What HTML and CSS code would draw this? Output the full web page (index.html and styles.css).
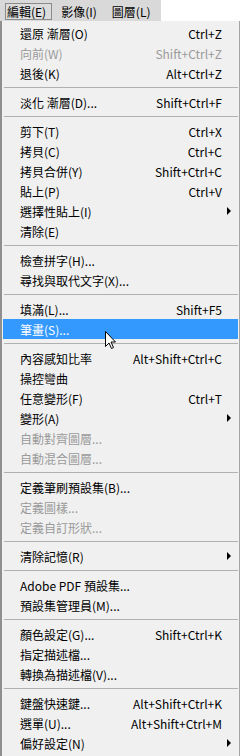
FILE: index.html
```html
<!DOCTYPE html>
<html lang="zh-Hant">
<head>
<meta charset="utf-8">
<link rel="stylesheet" href="styles.css">
</head>
<body>
<div class="screen">
  <div class="topline">
    <nav class="menubar">
      <span class="mb-item active">編輯(E)</span>
      <span class="mb-item">影像(I)</span>
      <span class="mb-item">圖層(L)</span>
    </nav>
  </div>
  <div class="menu">
    <div class="row"><span class="lbl">還原 漸層(O)</span><span class="key">Ctrl+Z</span><span class="sub"></span></div>
    <div class="row dis"><span class="lbl">向前(W)</span><span class="key">Shift+Ctrl+Z</span><span class="sub"></span></div>
    <div class="row"><span class="lbl">退後(K)</span><span class="key">Alt+Ctrl+Z</span><span class="sub"></span></div>
    <div class="sep"></div>
    <div class="row"><span class="lbl">淡化 漸層(D)...</span><span class="key">Shift+Ctrl+F</span><span class="sub"></span></div>
    <div class="sep"></div>
    <div class="row"><span class="lbl">剪下(T)</span><span class="key">Ctrl+X</span><span class="sub"></span></div>
    <div class="row"><span class="lbl">拷貝(C)</span><span class="key">Ctrl+C</span><span class="sub"></span></div>
    <div class="row"><span class="lbl">拷貝合併(Y)</span><span class="key">Shift+Ctrl+C</span><span class="sub"></span></div>
    <div class="row"><span class="lbl">貼上(P)</span><span class="key">Ctrl+V</span><span class="sub"></span></div>
    <div class="row"><span class="lbl">選擇性貼上(I)</span><span class="key"></span><span class="sub"><i class="arrow"></i></span></div>
    <div class="row"><span class="lbl">清除(E)</span><span class="key"></span><span class="sub"></span></div>
    <div class="sep"></div>
    <div class="row"><span class="lbl">檢查拼字(H)...</span><span class="key"></span><span class="sub"></span></div>
    <div class="row"><span class="lbl">尋找與取代文字(X)...</span><span class="key"></span><span class="sub"></span></div>
    <div class="sep"></div>
    <div class="row"><span class="lbl">填滿(L)...</span><span class="key">Shift+F5</span><span class="sub"></span></div>
    <div class="row hot"><span class="lbl">筆畫(S)...</span><span class="key"></span><span class="sub"></span></div>
    <div class="sep"></div>
    <div class="row"><span class="lbl">內容感知比率</span><span class="key">Alt+Shift+Ctrl+C</span><span class="sub"></span></div>
    <div class="row"><span class="lbl">操控彎曲</span><span class="key"></span><span class="sub"></span></div>
    <div class="row"><span class="lbl">任意變形(F)</span><span class="key">Ctrl+T</span><span class="sub"></span></div>
    <div class="row"><span class="lbl">變形(A)</span><span class="key"></span><span class="sub"><i class="arrow"></i></span></div>
    <div class="row dis"><span class="lbl">自動對齊圖層...</span><span class="key"></span><span class="sub"></span></div>
    <div class="row dis"><span class="lbl">自動混合圖層...</span><span class="key"></span><span class="sub"></span></div>
    <div class="sep"></div>
    <div class="row"><span class="lbl">定義筆刷預設集(B)...</span><span class="key"></span><span class="sub"></span></div>
    <div class="row dis"><span class="lbl">定義圖樣...</span><span class="key"></span><span class="sub"></span></div>
    <div class="row dis"><span class="lbl">定義自訂形狀...</span><span class="key"></span><span class="sub"></span></div>
    <div class="sep"></div>
    <div class="row"><span class="lbl">清除記憶(R)</span><span class="key"></span><span class="sub"><i class="arrow"></i></span></div>
    <div class="sep"></div>
    <div class="row"><span class="lbl">Adobe PDF 預設集...</span><span class="key"></span><span class="sub"></span></div>
    <div class="row"><span class="lbl">預設集管理員(M)...</span><span class="key"></span><span class="sub"></span></div>
    <div class="sep"></div>
    <div class="row"><span class="lbl">顏色設定(G)...</span><span class="key">Shift+Ctrl+K</span><span class="sub"></span></div>
    <div class="row"><span class="lbl">指定描述檔...</span><span class="key"></span><span class="sub"></span></div>
    <div class="row"><span class="lbl">轉換為描述檔(V)...</span><span class="key"></span><span class="sub"></span></div>
    <div class="sep"></div>
    <div class="row"><span class="lbl">鍵盤快速鍵...</span><span class="key">Alt+Shift+Ctrl+K</span><span class="sub"></span></div>
    <div class="row"><span class="lbl">選單(U)...</span><span class="key">Alt+Shift+Ctrl+M</span><span class="sub"></span></div>
    <div class="row"><span class="lbl">偏好設定(N)</span><span class="key"></span><span class="sub"><i class="arrow"></i></span></div>
  </div>
  <svg class="cursor" width="12" height="19" viewBox="0 0 12 19" xmlns="http://www.w3.org/2000/svg">
    <path d="M0.5 0.5 L0.5 15.5 L4 12 L6.5 17.5 L8.5 16.5 L6 11 L10.5 11 Z" fill="#fff" stroke="#000" stroke-width="1" stroke-linejoin="miter"/>
  </svg>
</div>
</body>
</html>
```

FILE: styles.css
```css
* { box-sizing: border-box; }
html, body { margin: 0; padding: 0; background: #ffffff; }
body {
  font-family: "Noto Sans CJK TC", "Noto Sans", sans-serif;
  font-size: 12px;
  color: #000;
}
.screen {
  position: relative;
  width: 240px;
  height: 756px;
  overflow: hidden;
  display: flex;
  flex-direction: column;
}
.topline {
  height: 21px;
  background: #ffffff;
  display: flex;
}
.menubar {
  flex: none;
  height: 21px;
  background: #d9d9d9;
  display: flex;
  align-items: stretch;
  gap: 7px;
  padding: 3px 5px 1px 5px;
  white-space: nowrap;
}
.mb-item {
  display: flex;
  align-items: center;
  padding: 0 5px 0 1px;
  border: 1px solid transparent;
  line-height: 1;
  white-space: nowrap;
}
.mb-item.active {
  border-color: #8b8b8b;
  background: #dcdcdc;
}
.menu {
  flex: 1;
  background: #f0f0f0;
  border-left: 2px solid #8f8f8f;
  border-right: 1px solid #a5a5a5;
  padding: 2px 1px 0 1px;
  display: flex;
  flex-direction: column;
}
.row {
  height: 20px;
  display: flex;
  align-items: center;
  padding-left: 17px;
  white-space: nowrap;
}
.lbl { flex: 1; }
.key { text-align: right; }
.sub {
  width: 16px;
  display: flex;
  align-items: center;
  padding-left: 5px;
}
.arrow {
  display: block;
  width: 0;
  height: 0;
  border-top: 4px solid transparent;
  border-bottom: 4px solid transparent;
  border-left: 4px solid #000;
}
.dis { color: #9a9a9a; }
.hot { background: #3399ff; color: #fff; }
.sep {
  height: 9px;
  display: flex;
  align-items: center;
  padding: 0 0 0 1px;
}
.sep::before {
  content: "";
  display: block;
  flex: 1;
  height: 1px;
  background: #b0b0b0;
}
.cursor {
  position: absolute;
  left: 105px;
  top: 331px;
}
```
